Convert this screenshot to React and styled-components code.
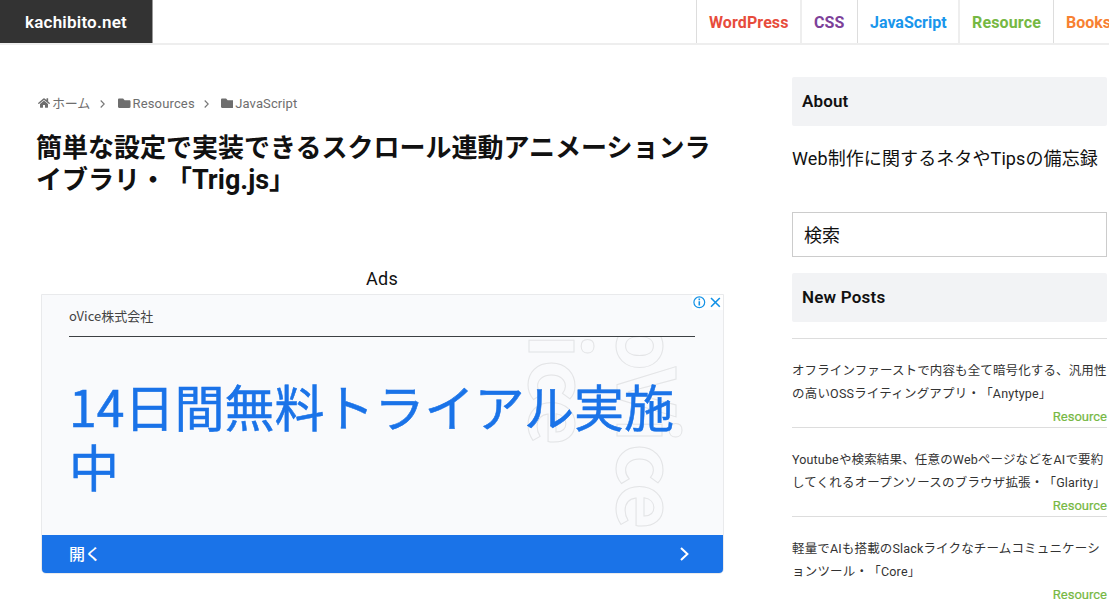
import React from "react";
import styled, { createGlobalStyle } from "styled-components";
import { FaHome, FaFolder } from "react-icons/fa";

const Global = createGlobalStyle`
  * { box-sizing: border-box; }
  html, body { margin: 0; overflow: hidden; }
  body {
    height: 600px;
    background: #fff;
    color: #111;
    font-family: Roboto, "Noto Sans CJK JP", sans-serif;
    text-spacing-trim: space-all;
  }
  h1, h2, p, ul { margin: 0; padding: 0; }
`;

const Header = styled.header`
  display: flex;
  justify-content: space-between;
  width: 1109px;
  height: 45px;
  border-bottom: 2px solid #eee;
  overflow: hidden;
`;
const Brand = styled.a`
  width: 153px;
  height: 44px;
  flex: none;
  padding-left: 25px;
  background: #333;
  border-right: 1px solid #999;
  color: #fff;
  font-size: 17px;
  font-weight: 600;
  line-height: 44px;
  letter-spacing: 0.22px;
`;
const Nav = styled.nav`
  display: flex;
  width: 413px;
  overflow: hidden;
`;
const NavItem = styled.a`
  flex: none;
  width: ${(p) => p.$w}px;
  padding-left: 12px;
  border-left: ${(p) => (p.$soft ? "2px solid #eee" : "1px solid #ddd")};
  color: ${(p) => p.$color};
  font-size: 16px;
  font-weight: 700;
  line-height: 45px;
  letter-spacing: ${(p) => p.$ls}px;
  white-space: nowrap;
`;

const Page = styled.div`
  display: flex;
  height: 555px;
`;
const Main = styled.main`
  width: 792px;
  flex: none;
  padding: 48px 0 0 36px;
`;
const Crumbs = styled.div`
  display: flex;
  align-items: center;
  height: 20px;
  padding-left: 2px;
  color: #6e6e6e;
  font-size: 13px;
  line-height: 22px;
`;
const Crumb = styled.span`
  display: flex;
  align-items: center;
  height: 22px;
  gap: ${(p) => p.$gap}px;
  letter-spacing: ${(p) => p.$ls}px;
`;
const CrumbText = styled.span`
  height: 21px;
`;
const CrumbArrow = styled.svg`
  width: 5px;
  height: 8px;
  margin: 1px ${(p) => p.$right}px 0 ${(p) => p.$left}px;
  fill: none;
  stroke: #777;
  stroke-width: 1.1;
`;
const Title = styled.h1`
  margin-top: 19px;
  font-size: 26px;
  font-weight: 700;
  line-height: 32px;
  white-space: nowrap;
`;
const Latin = styled.span`
  font-size: 27px;
  letter-spacing: 0;
`;
const AdLabel = styled.p`
  width: 692px;
  margin-top: 70px;
  text-align: center;
  font-size: 18px;
  line-height: 26px;
  letter-spacing: 0.2px;
`;
const Ad = styled.section`
  position: relative;
  width: 683px;
  height: 280px;
  margin: 2px 0 0 4.5px;
  border: 1px solid #e9eaec;
  border-radius: 0 0 5px 5px;
  background: #f9fafc;
  font-family: "Noto Sans CJK JP", sans-serif;
  overflow: hidden;
`;
const AdBrand = styled.p`
  margin: 0 27.5px;
  height: 42px;
  padding-top: 1px;
  border-bottom: 1px solid #3c4043;
  color: #444;
  font-size: 13px;
  line-height: 39px;
`;
const AdBody = styled.div`
  position: relative;
  height: 198px;
  padding: 39px 0 0 27.5px;
`;
const AdText = styled.p`
  position: relative;
  color: #1a73e8;
  font-size: 50px;
  line-height: 59.5px;
  -webkit-text-stroke: 0.5px #1a73e8;
`;
const Watermark = styled.svg`
  position: absolute;
  left: 458.5px;
  top: 0;
  width: 200px;
  height: 198px;
  overflow: hidden;
`;
const AdAction = styled.div`
  display: flex;
  align-items: center;
  justify-content: space-between;
  height: 38px;
  padding: 0 33.5px 0 27.5px;
  background: #1a73e8;
  color: #fff;
  font-size: 16px;
  font-weight: 500;
  line-height: 36px;
`;
const AdLinkText = styled.span`
  height: 38px;
`;
const AdArrow = styled.svg`
  width: 9px;
  height: 14px;
  fill: none;
  stroke: #fff;
  stroke-width: 2;
`;
const AdControls = styled.svg`
  position: absolute;
  right: 0;
  top: 0;
  width: 31px;
  height: 15px;
  background: #fff;
`;

const Side = styled.aside`
  width: 315px;
  flex: none;
  padding-top: 32px;
`;
const SideTitle = styled.h2`
  height: 49px;
  padding-left: 10px;
  border-radius: 2px;
  background: #f2f3f5;
  font-size: 17px;
  font-weight: 600;
  line-height: 49px;
  letter-spacing: ${(p) => p.$ls}px;
`;
const Note = styled.p`
  height: 86px;
  padding-top: 19px;
  font-size: 18px;
  line-height: 28px;
  letter-spacing: 0.1px;
  white-space: nowrap;
`;
const Search = styled.div`
  height: 45px;
  margin-bottom: 16px;
  padding-left: 11px;
  border: 1px solid #ccc;
  font-size: 18px;
  line-height: 45px;
`;
const Posts = styled.div`
  margin-top: 16px;
`;
const Post = styled.article`
  height: 89px;
  padding-top: 20px;
  border-top: 1px solid #ddd;
  color: #333;
  font-size: 12.5px;
  line-height: 23px;
  white-space: nowrap;
`;
const Line = styled.div`
  letter-spacing: ${(p) => p.$ls || 0}px;
`;
const Tag = styled.div`
  color: #76b843;
  font-size: 13px;
  text-align: right;
  -webkit-text-stroke: 0.2px #76b843;
`;

const navItems = [
  ["WordPress", "#e74c3c", 104, 0.1, false],
  ["CSS", "#7d4199", 57, 0.1, true],
  ["JavaScript", "#1996ec", 101, 0, false],
  ["Resource", "#76b843", 95, 0.15, true],
  ["Books", "#f78132", 90, 0, false],
];

const posts = [
  [["オフラインファーストで内容も全て暗号化する、汎用性", 0.12], ["の高いOSSライティングアプリ・「Anytype」", 0.2]],
  [["Youtubeや検索結果、任意のWebページなどをAIで要約", 0.16], ["してくれるオープンソースのブラウザ拡張・「Glarity」", 0.18]],
  [["軽量でAIも搭載のSlackライクなチームコミュニケーシ", 0.16], ["ョンツール・「Core」", 0.2]],
];

const Arrow = ({ left, right }) => (
  <CrumbArrow viewBox="0 0 5 8" $left={left} $right={right}>
    <path d="M0.7 0.5 L4.2 4 L0.7 7.5" />
  </CrumbArrow>
);

export default function App() {
  return (
    <>
      <Global />
      <Header>
        <Brand>kachibito.net</Brand>
        <Nav>
          {navItems.map(([label, color, w, ls, soft]) => (
            <NavItem key={label} $color={color} $w={w} $ls={ls} $soft={soft}>{label}</NavItem>
          ))}
        </Nav>
      </Header>
      <Page>
        <Main>
          <Crumbs>
            <Crumb $gap={2} $ls={-0.2}><FaHome size={12} /><CrumbText>ホーム</CrumbText></Crumb>
            <Arrow left={10} right={13} />
            <Crumb $gap={2} $ls={0.15}><FaFolder size={12.5} /><CrumbText>Resources</CrumbText></Crumb>
            <Arrow left={9} right={12} />
            <Crumb $gap={2} $ls={0.1}><FaFolder size={12.5} /><CrumbText>JavaScript</CrumbText></Crumb>
          </Crumbs>
          <Title>簡単な設定で実装できるスクロール連動アニメーションラ<br />イブラリ・「<Latin>Trig.js</Latin>」</Title>
          <AdLabel>Ads</AdLabel>
          <Ad>
            <AdBrand>oVice株式会社</AdBrand>
            <AdBody>
              <Watermark viewBox="500 337 200 198">
                <g fill="none" stroke="#e3e4e6" strokeWidth="1" fontFamily="Noto Sans CJK JP" fontWeight="700" fontSize="80">
                  <text transform="translate(616.8 0) rotate(90)" x="321 367 418 443.5 483" y="0">oVice</text>
                  <text transform="translate(528.8 0) rotate(90)" x="334 359.5 399" y="0">ice</text>
                </g>
              </Watermark>
              <AdText>14日間無料トライアル実施<br />中</AdText>
            </AdBody>
            <AdAction>
              <AdLinkText>開く</AdLinkText>
              <AdArrow viewBox="0 0 9 14"><path d="M1 1 L7.4 7 L1 13" /></AdArrow>
            </AdAction>
            <AdControls viewBox="0 0 31 15">
              <circle cx="7.3" cy="7.3" r="5.4" fill="none" stroke="#1492e6" strokeWidth="1.2" />
              <path d="M7.3 6.3v4.2M7.3 3.6v1.6M19 3l8.8 8.8M27.8 3L19 11.8" fill="none" stroke="#1492e6" strokeWidth="1.6" />
            </AdControls>
          </Ad>
        </Main>
        <Side>
          <SideTitle $ls={0.15}>About</SideTitle>
          <Note>Web制作に関するネタやTipsの備忘録</Note>
          <Search>検索</Search>
          <SideTitle $ls={0.2}>New Posts</SideTitle>
          <Posts>
            {posts.map((lines, i) => (
              <Post key={i}>
                {lines.map(([text, ls]) => <Line key={text} $ls={ls}>{text}</Line>)}
                <Tag>Resource</Tag>
              </Post>
            ))}
          </Posts>
        </Side>
      </Page>
    </>
  );
}
